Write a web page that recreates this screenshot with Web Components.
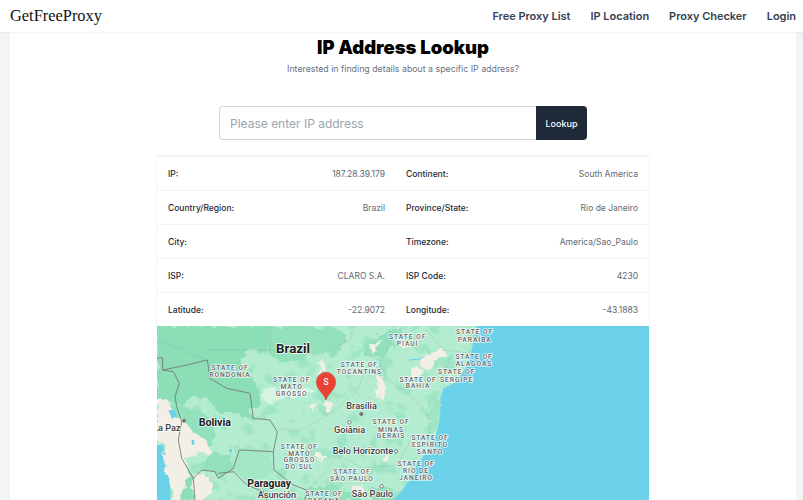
<!DOCTYPE html>
<html lang="en">
<head>
<meta charset="utf-8">
<title>IP Address Lookup</title>
<style>
  html, body { margin: 0; height: 500px; overflow: hidden; background: #f3f4f6; }
  body { font-family: Inter, "Liberation Sans", sans-serif; }
</style>
</head>
<body>
<site-header></site-header>
<lookup-page>
  <info-table></info-table>
  <map-view></map-view>
</lookup-page>

<script>
class SiteHeader extends HTMLElement {
  constructor() {
    super();
    this.attachShadow({ mode: 'open' });
  }

  connectedCallback() {
    this.shadowRoot.innerHTML = `
      <style>
        :host {
          display: flex;
          align-items: center;
          justify-content: space-between;
          height: 32px;
          padding: 0 7px 0 10px;
          background: #fff;
          box-shadow: 0 1px 2px rgba(0,0,0,0.06);
          position: relative;
          z-index: 1;
        }
        .logo { font: 16.4px "Liberation Serif", serif; color: #111; }
        nav { display: flex; gap: 20px; }
        a { font-size: 11px; font-weight: 600; color: #374151; text-decoration: none; letter-spacing: -0.02px; }
      </style>
      <span class="logo">GetFreeProxy</span>
      <nav>
        <a href="#">Free Proxy List</a>
        <a href="#">IP Location</a>
        <a href="#">Proxy Checker</a>
        <a href="#">Login</a>
      </nav>
    `;
  }
}

class LookupPage extends HTMLElement {
  constructor() {
    super();
    this.attachShadow({ mode: 'open' });
  }

  connectedCallback() {
    this.shadowRoot.innerHTML = `
      <style>
        :host {
          display: flex;
          flex-direction: column;
          align-items: center;
          height: 468px;
          margin: 0 7px 0 10px;
          background: #fff;
        }
        h1 { margin: 4px 0 0; font-size: 18.5px; line-height: 22px; font-weight: 900; color: #000; }
        p { margin: 4px 0 0; font-size: 8.8px; line-height: 14px; color: #6b7280; }
        form { display: flex; width: 368px; height: 34px; margin-top: 30px; margin-bottom: 16px; }
        input {
          flex: 1;
          min-width: 0;
          box-sizing: border-box;
          padding: 0 10px;
          border: 1px solid #d1d5db;
          border-right: 0;
          border-radius: 4px 0 0 4px;
          font: 12px Inter, sans-serif;
          outline: none;
        }
        input::placeholder { color: #9ca3af; opacity: 1; }
        button {
          width: 51px;
          border: 0;
          border-radius: 0 4px 4px 0;
          background: #1f2937;
          color: #fff;
          font: 500 9px Inter, sans-serif;
        }
      </style>
      <h1>IP Address Lookup</h1>
      <p>Interested in finding details about a specific IP address?</p>
      <form>
        <input type="text" placeholder="Please enter IP address">
        <button type="button">Lookup</button>
      </form>
      <slot></slot>
    `;
  }
}

class InfoTable extends HTMLElement {
  constructor() {
    super();
    this.attachShadow({ mode: 'open' });
  }

  connectedCallback() {
    const rows = [
      ['IP:', '187.28.39.179', 'Continent:', 'South America'],
      ['Country/Region:', 'Brazil', 'Province/State:', 'Rio de Janeiro'],
      ['City:', '', 'Timezone:', 'America/Sao_Paulo'],
      ['ISP:', 'CLARO S.A.', 'ISP Code:', '4230'],
      ['Latitude:', '-22.9072', 'Longitude:', '-43.1883'],
    ];
    const cells = rows.map(r => `
      <div class="row">
        <div class="cell"><b>${r[0]}</b><span>${r[1]}</span></div>
        <div class="cell"><b>${r[2]}</b><span>${r[3]}</span></div>
      </div>`).join('');

    this.shadowRoot.innerHTML = `
      <style>
        :host {
          display: block;
          width: 492px;
          box-sizing: border-box;
          border-radius: 3px 3px 0 0;
          box-shadow: 0 0 0 1px #f3f4f6;
          font-size: 8.5px;
        }
        .row { display: grid; grid-template-columns: 239px 253px; height: 34px; box-sizing: border-box; border-top: 1px solid #f3f4f6; }
        .cell { display: flex; align-items: center; justify-content: space-between; padding: 0 11px; }
        .cell + .cell { padding-left: 10px; }
        b { font-weight: 500; color: #1f2937; }
        span { color: #5f6774; }
      </style>
      ${cells}
    `;
  }
}

class MapView extends HTMLElement {
  constructor() {
    super();
    this.attachShadow({ mode: 'open' });
  }

  label(cx, lines) {
    return lines.map(([t, y]) => `<text x="${cx}" y="${y}">${t}</text>`).join('');
  }

  connectedCallback() {
    const land = 'M21 3H980L968 60 958 110 920 170 880 190 870 225 868 290 858 330 830 380 800 420 775 470 745 510 725 525H62L60 480 50 420 40 360H21Z';
    const states = [
      [240, [['STATE OF', 134], ['RONDÔNIA', 155]]],
      [425, [['STATE OF', 172], ['MATO', 193], ['GROSSO', 214]]],
      [628, [['STATE OF', 127], ['TOCANTINS', 148]]],
      [773, [['STATE OF', 42], ['PIAUÍ', 63]]],
      [974, [['STATE OF', 28], ['PARAÍBA', 50]]],
      [972, [['STATE OF', 102], ['ALAGOAS', 122]]],
      [920, [['STATE OF', 148], ['SERGIPE', 170]]],
      [804, [['STATE OF', 170], ['BAHIA', 190]]],
      [723, [['STATE OF', 298], ['MINAS', 320], ['GERAIS', 340]]],
      [840, [['STATE OF', 344], ['ESPÍRITO', 366], ['SANTO', 386]]],
      [798, [['STATE OF', 423], ['RIO DE', 444], ['JANEIRO', 465]]],
      [448, [['STATE OF', 371], ['MATO', 392], ['GROSSO', 412], ['DO SUL', 433]]],
      [606, [['STATE OF', 446], ['SÃO PAULO', 467]]],
      [522, [['STATE OF', 514], ['PARANÁ', 535]]],
    ].map(([cx, lines]) => this.label(cx, lines)).join('');

    this.shadowRoot.innerHTML = `
      <style>
        :host { display: block; width: 492px; height: 174px; overflow: hidden; }
        svg { display: block; width: 492px; height: 174px; }
        text { font-family: Roboto, "Liberation Sans", sans-serif; paint-order: stroke; stroke: #fff; stroke-linejoin: round; }
        .states text { font-size: 20px; font-weight: 500; letter-spacing: 2.9px; fill: #5f6368; stroke-width: 5; stroke-opacity: .85; text-anchor: middle; }
        .city text { font-size: 27.5px; font-weight: 500; fill: #3c4043; stroke-width: 5; stroke-opacity: .85; }
        .country text { font-weight: 700; fill: #202124; stroke-width: 5; stroke-opacity: .85; }
      </style>
      <svg viewBox="21 3 1476 522" xmlns="http://www.w3.org/2000/svg">
        <defs>
          <filter id="mottle" x="0" y="0" width="100%" height="100%" color-interpolation-filters="sRGB">
            <feTurbulence type="fractalNoise" baseFrequency="0.022" numOctaves="3" seed="11"/>
            <feColorMatrix values="0 0 0 0 0.56  0 0 0 0 0.875  0 0 0 0 0.725  7 0 0 0 -3.7"/>
            <feComposite in2="SourceGraphic" operator="in"/>
          </filter>
          <filter id="rough" x="-10%" y="-10%" width="120%" height="120%">
            <feTurbulence type="fractalNoise" baseFrequency="0.035" numOctaves="3" seed="4" result="n"/>
            <feDisplacementMap in="SourceGraphic" in2="n" scale="34" xChannelSelector="R" yChannelSelector="G"/>
          </filter>
        </defs>
        <rect x="21" y="3" width="1476" height="522" fill="#6ad1e9"/>
        <path fill="#b4ecd2" d="${land}"/>
        <path fill="#000" filter="url(#mottle)" opacity=".55" d="${land}"/>
        <g filter="url(#rough)">
          <!-- forest -->
          <path fill="#8cdeb7" d="M21 3H360L350 80 300 75 270 95 265 130 300 150 335 200 340 235 300 250 310 285 270 275 190 255 170 220 110 225 90 240 21 215Z"/>
          <path fill="#93e1bc" d="M360 3H560L590 40 560 90 500 80 460 100 380 110 350 80Z"/>
          <path fill="#a4e7c7" d="M250 370 360 365 372 440 330 470 290 470 250 440Z"/>
          <path fill="#93e1bc" d="M60 240 130 250 190 290 190 360 150 380 100 350 80 300Z"/>
          <path fill="#93e1bc" d="M190 385 240 385 250 430 205 460 195 440 160 432 170 400Z"/>
          <path fill="#93e1bc" d="M640 60 700 20 760 10 720 60 690 100 650 100Z"/>
          <path fill="#9fe5c4" d="M850 200 872 190 866 290 850 330 835 280Z"/>
          <path fill="#93e1bc" d="M470 490 540 480 620 500 640 525H470Z"/>
          <path fill="#93e1bc" d="M650 490 730 490 735 525H670Z"/>
          <path fill="#8cdeb7" d="M95 400 130 460 135 525H100Z"/>
          <!-- dry areas -->
          <path fill="#f3efe6" d="M21 218 45 222 80 275 110 300 170 350 190 385 140 380 100 400 118 450 90 525H66L60 480 50 420 40 360H21Z"/>
          <path fill="#f3efe6" d="M135 450 170 440 185 490 165 525H125Z"/>
          <path fill="#d6f3e4" d="M340 195 420 190 500 195 470 212 400 222 345 232Z"/>
          <path fill="#f3efe6" d="M506 112h18v30h-18ZM525 225 548 235 540 262 524 250ZM678 150 700 150 702 225 682 220ZM480 240 495 240 488 258Z"/>
          <path fill="#f3efe6" d="M660 60 690 45 682 80 664 85ZM745 50 780 50 775 65 755 75ZM790 130 810 130 815 150 785 155ZM820 90 880 70 890 90 850 110 830 140 815 130Z"/>
          <path fill="#f3efe6" d="M500 380 530 395 505 405ZM710 385l10 25h-20ZM610 490l30-10 5 25-30 10Z"/>
        </g>
        <!-- lakes and rivers -->
        <path fill="#6ad1e9" d="M55 256 72 254 82 272 66 282Z"/>
        <path fill="#6ad1e9" d="M125 345h8v14h-8ZM238 372h8v10h-8Z"/>
        <path fill="none" stroke="#6ad1e9" stroke-width="3" d="M778 105 810 102 825 92"/>
        <!-- state lines -->
        <g fill="none" stroke="#8a9a92" stroke-width="1.5" stroke-dasharray="4 5">
          <path d="M21 45 100 75 172 105M175 75 360 75 362 3M360 75 510 90 600 45 610 3M690 120 640 150 620 200 560 250 500 290 440 320 385 310"/>
          <path d="M730 3 720 50 690 120 720 170 780 210 820 250 840 290 838 330M780 350 740 420 640 430 560 390 540 420 500 470 470 495M830 15 880 75 960 85M900 100 880 160M780 430 790 480"/>
        </g>
        <!-- country borders -->
        <g fill="none" stroke="#6f6f6f" stroke-width="2.4" stroke-linejoin="round">
          <path d="M21 100 38 98 38 135 70 140 88 175 75 215 80 245 95 290 85 345 95 400 130 460 155 435 195 440 205 460 250 430 268 375 370 380 382 320 360 285 310 280 300 205 230 190 180 160 172 105 110 120 38 135"/>
          <path d="M370 380 372 435 430 480 470 495 465 525"/>
          <path d="M205 445 250 440 290 480 340 500 350 525M130 460 135 525"/>
        </g>
        <g class="states">${states}</g>
        <g class="country">
          <text x="378" y="83" font-size="40">Brazil</text>
          <text x="146" y="302" font-size="32">Bolivia</text>
          <text x="292" y="485" font-size="31">Paraguay</text>
        </g>
        <g class="city">
          <text x="92" y="319" text-anchor="end">La Paz</text>
          <text x="589" y="252">Brasília</text>
          <text x="552" y="323">Goiânia</text>
          <text x="548" y="388">Belo Horizonte</text>
          <text x="605" y="515">São Paulo</text>
          <text x="323" y="518">Asunción</text>
        </g>
        <g fill="#fff" stroke="#5f6368" stroke-width="2.5">
          <circle cx="102" cy="287" r="5"/><circle cx="634" cy="267" r="5"/>
          <circle cx="598" cy="292" r="5"/><circle cx="738" cy="379" r="5"/><circle cx="695" cy="484" r="5"/>
        </g>
        <circle cx="102" cy="287" r="3" fill="#3c4043"/><circle cx="634" cy="267" r="3" fill="#3c4043"/>
        <!-- pin -->
        <path fill="#ea4335" stroke="#d33426" stroke-width="1.5" d="M528 225C523 205 499 195 499 171A29 29 0 0 1 557 171C557 195 533 205 528 225Z"/>
        <text x="528" y="179" text-anchor="middle" font-size="25" font-weight="500" style="fill:#fff;stroke:none">S</text>
      </svg>
    `;
  }
}

customElements.define('site-header', SiteHeader);
customElements.define('lookup-page', LookupPage);
customElements.define('info-table', InfoTable);
customElements.define('map-view', MapView);
</script>
</body>
</html>
